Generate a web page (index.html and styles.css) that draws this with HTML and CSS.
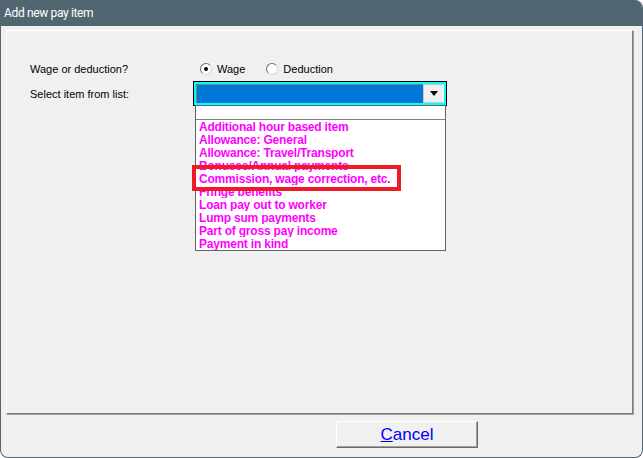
FILE: index.html
```html
<!DOCTYPE html>
<html lang="en">
<head>
    <meta charset="UTF-8" />
    <title>Add new pay item</title>
    <link rel="stylesheet" href="styles.css">
</head>
<body>
    <div class="window">
        <div class="titlebar">Add new pay item</div>
        <div class="client">
            <div class="panel">
                <div class="formGrid">
                    <label class="fieldLabel">Wage or deduction?</label>
                    <div class="radioGroup">
                        <span class="radio checked"></span><span class="radioText">Wage</span>
                        <span class="radio"></span><span class="radioText">Deduction</span>
                    </div>
                    <label class="fieldLabel">Select item from list:</label>
                    <div class="combo">
                        <div class="comboInner">
                            <div class="comboValue"></div>
                            <div class="comboButton"><span class="arrow"></span></div>
                        </div>
                        <div class="dropList">
                            <div class="blankRow"></div>
                            <div class="item">Additional hour based item</div>
                            <div class="item">Allowance: General</div>
                            <div class="item">Allowance: Travel/Transport</div>
                            <div class="item">Bonuses/Annual payments</div>
                            <div class="item">Commission, wage correction, etc.</div>
                            <div class="item">Fringe benefits</div>
                            <div class="item">Loan pay out to worker</div>
                            <div class="item">Lump sum payments</div>
                            <div class="item">Part of gross pay income</div>
                            <div class="item">Payment in kind</div>
                            <div class="highlight"></div>
                        </div>
                    </div>
                </div>
            </div>
            <div class="buttonRow">
                <button class="cancelBtn"><u>C</u>ancel</button>
            </div>
        </div>
    </div>
</body>
</html>
```

FILE: styles.css
```css
body {
    margin: 0;
    background: #ffffff;
    font-family: "Liberation Sans", Arial, sans-serif;
}
.window {
    width: 643px;
    height: 458px;
    box-sizing: border-box;
    background: #f0f0f0;
    border: 1px solid #526672;
    border-top: none;
    border-radius: 0 8px 8px 8px;
    overflow: hidden;
}
.titlebar {
    height: 26px;
    margin: 0 -1px;
    padding-left: 4px;
    background: #526672;
    color: #ffffff;
    font-family: Roboto, "Noto Sans", sans-serif;
    font-size: 12px;
    letter-spacing: -0.35px;
    line-height: 26px;
}
.client {
    padding: 4px 9px 0 5px;
}
.panel {
    height: 384px;
    box-sizing: border-box;
    border: 1px solid;
    border-color: #ffffff #7a7a7a #7a7a7a #ffffff;
    box-shadow: 1px 1px 0 #a0a0a0;
    padding: 26px 0 0 23px;
}
.formGrid {
    display: grid;
    grid-template-columns: 163px 254px;
    grid-template-rows: 24px 25px;
    align-items: center;
}
.fieldLabel {
    font-size: 11px;
    color: #000000;
}
.radioGroup {
    display: flex;
    align-items: center;
    font-size: 11px;
}
.radio {
    width: 10px;
    height: 10px;
    border-radius: 50%;
    border: 1px solid;
    border-color: #707070 #d8d8d8 #d8d8d8 #707070;
    background: #ffffff;
    margin: 0 5px 0 7px;
    display: flex;
    align-items: center;
    justify-content: center;
}
.radio.checked::after {
    content: "";
    width: 4px;
    height: 4px;
    border-radius: 50%;
    background: #000000;
}
.radioText {
    margin-right: 14px;
}
.combo {
    position: relative;
    height: 25px;
    box-sizing: border-box;
    border: 1px solid #000000;
}
.comboInner {
    height: 100%;
    box-sizing: border-box;
    border: 2px solid #00ffff;
    display: flex;
}
.comboValue {
    flex: 1;
    background: #0078d7;
    border-top: 1px solid #808080;
    border-left: 1px solid #808080;
}
.comboButton {
    width: 19px;
    background: #f0f0f0;
    border: 1px solid #c8c8c8;
    border-right-color: #ffffff;
    display: flex;
    align-items: center;
    justify-content: center;
}
.arrow {
    width: 0;
    height: 0;
    border-left: 4px solid transparent;
    border-right: 4px solid transparent;
    border-top: 5px solid #000000;
}
/* dropped-down list under the combo box */
.dropList {
    position: absolute;
    top: 100%;
    left: 1px;
    width: 251px;
    box-sizing: border-box;
    background: #ffffff;
    border: 1px solid #646464;
}
.blankRow {
    height: 13px;
    border-bottom: 1px solid #808080;
}
.item {
    height: 13px;
    padding-left: 3px;
    font-size: 12px;
    font-weight: bold;
    letter-spacing: -0.2px;
    line-height: 15px;
    color: #ff00ff;
    overflow: hidden;
}
.highlight {
    position: absolute;
    left: -4px;
    top: 59px;
    width: 209px;
    height: 26px;
    box-sizing: border-box;
    border: 4px solid #ed1c24;
}
.buttonRow {
    display: flex;
    padding: 7px 0 0 330px;
}
.cancelBtn {
    width: 142px;
    height: 27px;
    background: #f0f0f0;
    border: 1px solid;
    border-color: #ffffff #6a6a6a #6a6a6a #ffffff;
    box-shadow: inset -1px -1px 0 #a0a0a0;
    color: #0000ff;
    font-family: "Liberation Sans", Arial, sans-serif;
    font-size: 17px;
    padding: 0;
}
```
